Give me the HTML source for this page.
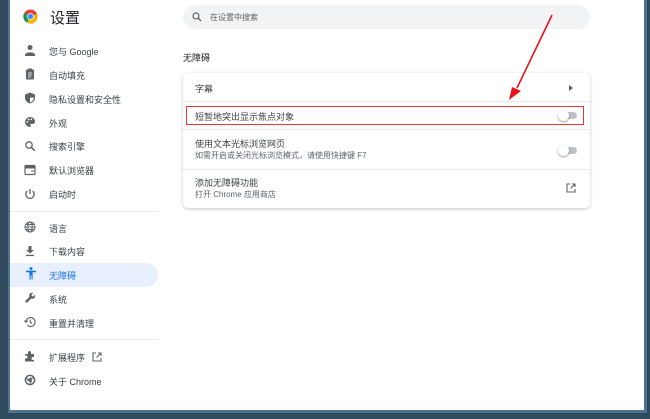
<!DOCTYPE html>
<html><head><meta charset="utf-8"><style>
body{margin:0;width:650px;height:419px;background:#2f4a5c;overflow:hidden;font-family:"Liberation Sans","Noto Sans CJK SC",sans-serif;position:relative}
.frame{position:absolute;left:8px;top:0;width:639px;height:413px;background:#4d7591}
.win{position:absolute;left:10px;top:0;width:634px;height:410px;background:#fff}
.t{position:absolute;font-size:9px;color:#3c4043;white-space:nowrap}
.ic{position:absolute;left:24px}
.card{position:absolute;left:183px;top:73px;width:407px;height:135px;border-radius:5px;box-shadow:0 1px 3px rgba(60,64,67,.3);background:#fff}
.sep{position:absolute;left:0;width:407px;height:1px;background:#e8eaed}
.tog{position:absolute;width:17px;height:7px;border-radius:4px;background:#bdc1c6}
.tog:before{content:"";position:absolute;left:-2px;top:-2px;width:11px;height:11px;border-radius:50%;background:#fff;box-shadow:0 1px 2px rgba(0,0,0,.4)}
</style></head><body>
<div class="frame"></div>
<div class="win"></div>
<svg style="position:absolute;left:23px;top:9px" width="15" height="15" viewBox="0 0 16 16"><circle cx="8" cy="8" r="7.5" fill="#db4437"/><path d="M8 8 L14.9 5 A7.5 7.5 0 0 1 4 14.4Z" fill="#f4b400"/><path d="M8 8 L4 14.4 A7.5 7.5 0 0 1 1.2 4.5Z" fill="#0f9d58"/><circle cx="8" cy="8" r="3.6" fill="#fff"/><circle cx="8" cy="8" r="2.8" fill="#4285f4"/></svg>
<div class="t" style="left:50px;top:7px;font-size:15px;color:#202124">设置</div>
<div style="position:absolute;left:183px;top:5px;width:407px;height:24px;border-radius:12px;background:#f1f3f4"></div>
<svg style="position:absolute;left:192px;top:12px" width="10" height="10" viewBox="0 0 10 10"><circle cx="4" cy="4" r="3" fill="none" stroke="#5f6368" stroke-width="1.2"/><path d="M6.2 6.2 9 9" stroke="#5f6368" stroke-width="1.3"/></svg>
<div class="t" style="left:210px;top:12px;font-size:8px;color:#5f6368">在设置中搜索</div>
<div style="position:absolute;left:10px;top:263px;width:148px;height:24px;background:#e8f0fe;border-radius:0 12px 12px 0"></div>

<svg class="ic" style="top:44px" width="12" height="12" viewBox="0 0 12 12" fill="#5f6368"><circle cx="6" cy="3.5" r="2.5"/><path d="M1 11c0-3.5 10-3.5 10 0v1H1z"/></svg>
<svg class="ic" style="top:68px" width="12" height="12" viewBox="0 0 12 12" fill="#5f6368"><rect x="2" y="1.5" width="8" height="10" rx="1"/><rect x="4" y="0.5" width="4" height="2" fill="#5f6368"/><path d="M4 5h4M4 7h4M4 9h3" stroke="#fff" stroke-width=".8"/></svg>
<svg class="ic" style="top:92px" width="12" height="12" viewBox="0 0 12 12" fill="#5f6368"><path d="M6 0.5l5 2v3c0 3-2 5-5 6-3-1-5-3-5-6v-3z"/><path d="M6 1.8v8.8c2-0.8 3.7-2.4 3.8-5H6z" fill="#fff"/></svg>
<svg class="ic" style="top:116px" width="12" height="12" viewBox="0 0 12 12"><path d="M6 1a5 5 0 0 0 0 10c1 0 1-1 .5-1.5S6 8 7 8h1.5A2.5 2.5 0 0 0 11 5.5C11 3 8.8 1 6 1z" fill="#5f6368"/><circle cx="3.3" cy="6" r=".9" fill="#fff"/><circle cx="4.5" cy="3.5" r=".9" fill="#fff"/><circle cx="7.3" cy="3.3" r=".9" fill="#fff"/></svg>
<svg class="ic" style="top:140px" width="12" height="12" viewBox="0 0 12 12"><circle cx="5" cy="5" r="3.2" fill="none" stroke="#5f6368" stroke-width="1.3"/><path d="M7.3 7.3l3.5 3.5" stroke="#5f6368" stroke-width="1.5"/></svg>
<svg class="ic" style="top:164px" width="12" height="12" viewBox="0 0 12 12"><rect x="1" y="1.5" width="10" height="9" rx="1" fill="none" stroke="#5f6368" stroke-width="1.2"/><rect x="1" y="1.5" width="10" height="3" fill="#5f6368"/><path d="M7 7h3" stroke="#5f6368"/></svg>
<svg class="ic" style="top:188px" width="12" height="12" viewBox="0 0 12 12" fill="none" stroke="#5f6368" stroke-width="1.3"><path d="M6 1v5M3.3 3a4.2 4.2 0 1 0 5.4 0"/></svg>
<svg class="ic" style="top:221px" width="12" height="12" viewBox="0 0 12 12" fill="none" stroke="#5f6368" stroke-width="1"><circle cx="6" cy="6" r="5"/><ellipse cx="6" cy="6" rx="2.2" ry="5"/><path d="M1 6h10M1.8 3.5h8.4M1.8 8.5h8.4"/></svg>
<svg class="ic" style="top:245px" width="12" height="12" viewBox="0 0 12 12" fill="#5f6368"><path d="M4.5 1h3v4h2.5L6 8.5 2 5h2.5z"/><rect x="2" y="9.8" width="8" height="1.3"/></svg>
<svg class="ic" style="top:267px;left:26px" width="10" height="13" viewBox="0 0 10 13" fill="#1a73e8"><circle cx="5" cy="1.6" r="1.5"/><path d="M0 3.8h10v1.4H6.6V12.5H5.5V8.5h-1v4H3.4V5.2H0z"/></svg>
<svg class="ic" style="top:292px" width="12" height="12" viewBox="0 0 12 12" fill="#5f6368"><path d="M11 2.8 9 4.8 7.2 3 9.2 1C7.8.4 6 .9 5.4 2.5c-.3.8-.2 1.6.1 2.2L1 9.2 2.8 11l4.5-4.5c.7.3 1.5.3 2.2.1C11 6 11.6 4.2 11 2.8z"/></svg>
<svg class="ic" style="top:316px" width="12" height="12" viewBox="0 0 12 12" fill="none" stroke="#5f6368" stroke-width="1.1"><path d="M2 6a4.5 4.5 0 1 1 1.3 3.2"/><path d="M0.5 4.5 2 6.3 3.6 4.6"/><path d="M6.3 3.5V6.2l1.8 1.2"/></svg>
<svg class="ic" style="top:350px" width="12" height="12" viewBox="0 0 12 12" fill="#5f6368"><path d="M1 4h3V2.5a1.5 1.5 0 0 1 3 0V4h3v3h-1a1.5 1.5 0 0 0 0 3h1v1.5H1V8.5h1a1.5 1.5 0 0 0 0-3H1z"/></svg>
<svg class="ic" style="top:374px" width="12" height="12" viewBox="0 0 12 12"><circle cx="6" cy="6" r="4.6" fill="none" stroke="#5f6368" stroke-width="1.5"/><circle cx="6" cy="6" r="1.9" fill="#5f6368"/><path d="M6 4.1h4.5M4.3 7 2 2.8M7.6 7l-2.2 3.8" stroke="#5f6368" stroke-width="1"/></svg>

<div class="t" style="left:49px;top:45px">您与 Google</div>
<div class="t" style="left:49px;top:69px">自动填充</div>
<div class="t" style="left:49px;top:93px">隐私设置和安全性</div>
<div class="t" style="left:49px;top:117px">外观</div>
<div class="t" style="left:49px;top:140px">搜索引擎</div>
<div class="t" style="left:49px;top:164px">默认浏览器</div>
<div class="t" style="left:49px;top:188px">启动时</div>
<div style="position:absolute;left:10px;top:211px;width:148px;height:1px;background:#eee"></div>
<div class="t" style="left:49px;top:222px">语言</div>
<div class="t" style="left:49px;top:245px">下载内容</div>
<div class="t" style="left:49px;top:269px;color:#1a73e8">无障碍</div>
<div class="t" style="left:49px;top:293px">系统</div>
<div class="t" style="left:49px;top:317px">重置并清理</div>
<div style="position:absolute;left:10px;top:339px;width:148px;height:1px;background:#eee"></div>
<div class="t" style="left:49px;top:351px">扩展程序</div>
<svg style="position:absolute;left:92px;top:352px" width="10" height="10" viewBox="0 0 10 10" fill="none" stroke="#5f6368" stroke-width="1.1"><path d="M4 1H1v8h8V6M6 1h3v3M9 1 4.5 5.5"/></svg>
<div class="t" style="left:49px;top:375px">关于 Chrome</div>
<div class="t" style="left:183px;top:51px;font-size:9px;color:#202124">无障碍</div>
<div class="card">
<div class="t" style="left:12px;top:9px">字幕</div>
<svg style="position:absolute;left:386px;top:12px" width="4" height="6"><path d="M0 0 4 3 0 6z" fill="#5f6368"/></svg>
<div class="sep" style="top:28px"></div>
<div style="position:absolute;left:3px;top:33px;width:398px;height:19px;border:1.5px solid #e53935;box-sizing:border-box"></div>
<div class="t" style="left:12px;top:37px">短暂地突出显示焦点对象</div>
<div class="tog" style="left:377px;top:39px"></div>
<div class="sep" style="top:56px"></div>
<div class="t" style="left:12px;top:64px">使用文本光标浏览网页</div>
<div class="t" style="left:12px;top:77px;font-size:8px;color:#5f6368">如需开启或关闭光标浏览模式，请使用快捷键 F7</div>
<div class="tog" style="left:377px;top:74px"></div>
<div class="sep" style="top:96px"></div>
<div class="t" style="left:12px;top:103px">添加无障碍功能</div>
<div class="t" style="left:12px;top:116px;font-size:8px;color:#5f6368">打开 Chrome 应用商店</div>
<svg style="position:absolute;left:383px;top:110px" width="10" height="10" viewBox="0 0 10 10" fill="none" stroke="#5f6368" stroke-width="1.1"><path d="M4 1H1v8h8V6M6 1h3v3M9 1 4.5 5.5"/></svg>
</div>
<svg style="position:absolute;left:0;top:0" width="650" height="419"><path d="M552 15 517 88" stroke="#e8141a" stroke-width="1.6"/><path d="M509 100l3-13 9 4z" fill="#e8141a"/></svg>
</body></html>
